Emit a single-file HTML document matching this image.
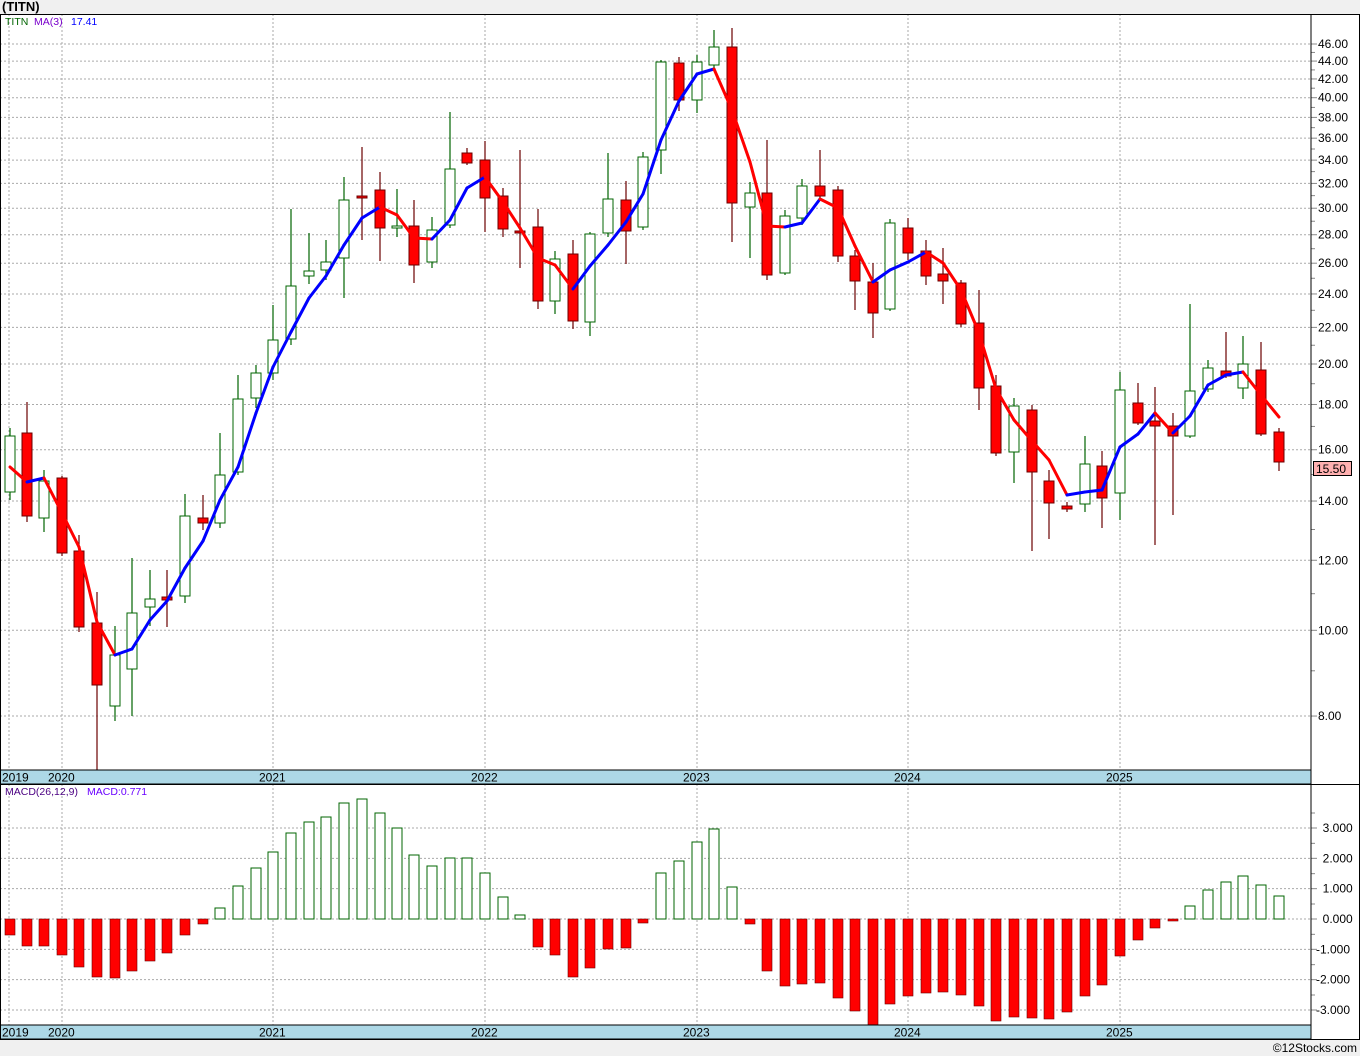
<!DOCTYPE html>
<html><head><meta charset="utf-8"><style>
html,body{margin:0;padding:0;background:#f0f0f0;}
svg{display:block;font-family:"Liberation Sans",sans-serif;}
</style></head><body>
<svg id="s" width="1360" height="1056" xmlns="http://www.w3.org/2000/svg"></svg>
<script>
var C=[[10,436,492,428,500,1],[27,433,516,402,522,0],[44,481,518,470,532,1],[62,478,553,476,556,0],[79,551,627,535,632,0],[97,623,685,592,770,0],[115,655,706,626,721,1],[132,613,669,558,716,1],[150,599,607,570,626,1],[167,597,600,570,627,0],[185,516,596,494,603,1],[203,518,523,495,530,0],[220,475,523,433,528,1],[238,399,472,375,475,1],[256,373,398,365,408,1],[273,340,373,305,380,1],[291,286,339,209,345,1],[309,271,276,233,284,1],[326,262,270,240,280,1],[344,200,258,177,298,1],[362,196,198,147,240,0],[380,190,228,172,261,0],[397,226,228,189,237,1],[414,226,265,200,283,0],[432,230,262,217,268,1],[450,169,225,112,228,1],[467,153,163,148,165,0],[485,160,198,141,232,0],[503,196,229,188,237,0],[520,231,232,150,268,0],[538,227,301,209,309,0],[555,259,301,251,314,1],[573,254,321,240,329,0],[590,234,322,232,336,1],[608,199,233,153,237,1],[626,200,231,181,264,0],[643,157,227,152,230,1],[661,62,150,60,174,1],[679,63,100,57,111,0],[697,62,100,55,113,1],[714,47,65,30,70,1],[732,47,203,28,242,0],[750,193,207,182,258,1],[767,193,275,140,280,0],[785,216,273,210,275,1],[802,186,218,179,225,1],[820,186,196,150,200,0],[838,190,256,186,262,0],[855,256,281,250,310,0],[873,282,313,263,338,0],[890,223,309,219,311,1],[908,228,253,218,260,0],[926,251,276,240,285,0],[943,274,281,248,304,0],[961,283,324,280,327,0],[979,323,388,290,410,0],[996,386,453,375,456,0],[1014,406,452,398,483,1],[1032,410,472,405,551,0],[1049,481,503,470,539,0],[1067,506,509,502,512,0],[1085,464,504,436,512,1],[1102,466,498,451,528,0],[1120,390,493,372,520,1],[1138,403,423,383,425,0],[1155,421,426,387,545,0],[1173,426,436,413,515,0],[1190,391,436,304,438,1],[1208,368,389,360,392,1],[1226,371,376,332,378,0],[1243,364,388,336,399,1],[1261,370,434,342,436,0],[1279,432,462,428,471,0]];
var MA=[467,482,478,513,547,622,655,649,620,601,568,541,500,467,413,367,332,298,276,245,218,207,215,238,239,220,188,177,202,228,258,265,289,266,245,222,194,140,101,74,69,110,162,226,227,223,199,208,246,282,270,262,252,263,290,333,389,420,441,460,495,492,490,447,434,413,433,416,385,375,372,395,417];
var M=[935,946,946,955,967,977,978,971,961,953,935,924,908,886,868,852,833,822,817,803,799,813,828,855,866,858,858,873,897,915,947,955,977,968,949,948,923,873,861,842,829,887,924,971,986,984,983,998,1011,1025,1004,996,993,992,995,1006,1021,1017,1018,1019,1012,996,985,956,940,928,920,906,890,882,876,885,896];
var o='';
function py(p){return 44+(Math.log(46)-Math.log(p))*384.2;}
o+='<rect x="0" y="14" width="1360" height="1026" fill="#fff"/>';
o+='<text x="2" y="11" font-size="13" font-weight="bold" fill="#000">(TITN)</text>';
var yrs=[[9,'2019'],[62,'2020'],[273,'2021'],[485,'2022'],[697,'2023'],[908,'2024'],[1120,'2025']];
yrs.forEach(function(g){o+='<line x1="'+g[0]+'" y1="14" x2="'+g[0]+'" y2="770" stroke="#aaa" stroke-dasharray="2,2"/><line x1="'+g[0]+'" y1="784" x2="'+g[0]+'" y2="1025" stroke="#aaa" stroke-dasharray="2,2"/>';});
for(var p=8;p<=46;p+=2){var y=py(p);o+='<line x1="0" y1="'+y+'" x2="1311" y2="'+y+'" stroke="#aaa" stroke-dasharray="2,2"/><line x1="1311" y1="'+y+'" x2="1317" y2="'+y+'" stroke="#888"/><text x="1318" y="'+(y+4)+'" font-size="12" fill="#000">'+p.toFixed(2)+'</text>';
 if(p<46){var y2=py(p+1);o+='<line x1="1311" y1="'+y2+'" x2="1315" y2="'+y2+'" stroke="#888"/>';}}
for(var v=-3;v<=3;v++){var y=919-30.33*v;o+='<line x1="0" y1="'+y+'" x2="1311" y2="'+y+'" stroke="#aaa" stroke-dasharray="2,2"/><line x1="1311" y1="'+y+'" x2="1317" y2="'+y+'" stroke="#888"/><line x1="1311" y1="'+(y-15)+'" x2="1315" y2="'+(y-15)+'" stroke="#888"/><text x="1316" y="'+(y+4)+'" font-size="12" fill="#000">'+(v<0?'-':'\u2007')+Math.abs(v).toFixed(3)+'</text>';}
C.forEach(function(c){var col=c[5]?'#006400':'#6b0000';var fill=c[5]?'#fff':'#f00';
o+='<line x1="'+c[0]+'" y1="'+c[3]+'" x2="'+c[0]+'" y2="'+c[4]+'" stroke="'+col+'" stroke-width="1.2"/>';
var h=Math.max(c[2]-c[1],2);o+='<rect x="'+(c[0]-5)+'" y="'+c[1]+'" width="10" height="'+h+'" fill="'+fill+'" stroke="'+col+'"/>';});
for(var i=1;i<MA.length;i++){var col=MA[i]<MA[i-1]?'#0000ff':'#ff0000';o+='<line x1="'+C[i-1][0]+'" y1="'+MA[i-1]+'" x2="'+C[i][0]+'" y2="'+MA[i]+'" stroke="'+col+'" stroke-width="3" stroke-linecap="round"/>';}
M.forEach(function(b,i){var x=C[i][0]-5;if(b<919){o+='<rect x="'+x+'" y="'+b+'" width="10" height="'+(919-b)+'" fill="#fff" stroke="#006400"/>';}else{o+='<rect x="'+x+'" y="919" width="10" height="'+Math.max(b-919,2)+'" fill="#f00" stroke="#6b0000" stroke-width="0.6"/>';}});
o+='<rect x="0" y="770" width="1311" height="14" fill="#add8e6" stroke="#000"/>';
o+='<rect x="0" y="1025" width="1311" height="14" fill="#add8e6" stroke="#000"/>';
yrs.forEach(function(g){o+='<text x="'+(g[0]===9?2:g[0]-14)+'" y="781.5" font-size="12">'+g[1]+'</text><text x="'+(g[0]===9?2:g[0]-14)+'" y="1036.5" font-size="12">'+g[1]+'</text>';});
o+='<rect x="0.5" y="14.5" width="1359" height="1025" fill="none" stroke="#000"/>';
o+='<line x1="1311" y1="14" x2="1311" y2="1040" stroke="#000"/>';
o+='<line x1="0" y1="784.5" x2="1360" y2="784.5" stroke="#000"/>';
o+='<text x="5" y="25" font-size="10.5" fill="#006400">TITN</text><text x="34" y="25" font-size="10.5" fill="#7a00cc">MA(3)</text><text x="71" y="25" font-size="10.5" fill="#0000ff">17.41</text>';
o+='<text x="5" y="795" font-size="10.5" fill="#4b0082">MACD(26,12,9)</text><text x="87" y="795" font-size="10.5" fill="#6a00ff">MACD:0.771</text>';
o+='<rect x="1313.5" y="461.5" width="38" height="14" fill="#ffb0b0" stroke="#000"/><text x="1316" y="473" font-size="12">15.50</text>';
o+='<text x="1357" y="1052" font-size="12" text-anchor="end">©12Stocks.com</text>';
document.getElementById('s').innerHTML=o;
</script>
</body></html>
